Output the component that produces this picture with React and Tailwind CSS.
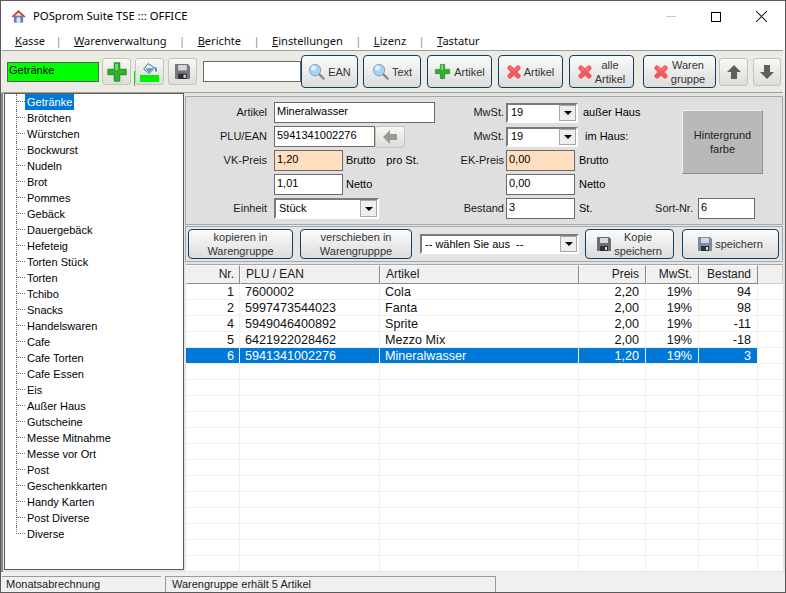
import React from 'react';

const groups = ['Getränke','Brötchen','Würstchen','Bockwurst','Nudeln','Brot','Pommes','Gebäck','Dauergebäck','Hefeteig','Torten Stück','Torten','Tchibo','Snacks','Handelswaren','Cafe','Cafe Torten','Cafe Essen','Eis','Außer Haus','Gutscheine','Messe Mitnahme','Messe vor Ort','Post','Geschenkkarten','Handy Karten','Post Diverse','Diverse'];

const rows = [
  ['1','7600002','Cola','2,20','19%','94'],
  ['2','5997473544023','Fanta','2,00','19%','98'],
  ['4','5949046400892','Sprite','2,00','19%','-11'],
  ['5','6421922028462','Mezzo Mix','2,00','19%','-18'],
  ['6','5941341002276','Mineralwasser','1,20','19%','3'],
];

// Icons
function Plus({ size = 22 }) {
  return (
    <svg viewBox="0 0 24 24" width={size} height={size}>
      <path d="M9 2h6v7h7v6h-7v7H9v-7H2V9h7z" fill="#2fb02f" stroke="#1d8a1d" strokeWidth="1" />
      <path d="M10 3h3v7h-3z" fill="#6fe06f" />
    </svg>
  );
}

function Cross({ size = 14 }) {
  return (
    <svg viewBox="0 0 14 14" width={size} height={size}>
      <path d="M3 3 11 11M11 3 3 11" stroke="#f2585c" strokeWidth="5" strokeLinecap="round" />
      <path d="M3 2.500 6 5M11 2.500 8 5" stroke="#fb9a9c" strokeWidth="1" strokeLinecap="round" />
    </svg>
  );
}

function Lens() {
  return (
    <svg viewBox="0 0 18 18" width="17" height="17">
      <path d="m11.500 11.500 5 5" stroke="#8a8a80" strokeWidth="2.500" strokeLinecap="round" />
      <circle cx="7.500" cy="7.500" r="6" fill="#a9d4f5" stroke="#7d9db8" strokeWidth="1" />
      <circle cx="6" cy="5.500" r="2.500" fill="#e4f3fd" />
    </svg>
  );
}

function Floppy({ size = 14, color = '#6b6e76' }) {
  return (
    <svg viewBox="0 0 14 14" width={size} height={size}>
      <path d="M0 0h12l2 2v12H0z" fill={color} />
      <path d="M3 1h8v5H3z" fill="#d4d8de" />
      <path d="M3 9h8v5H3z" fill="#2e3036" />
      <path d="M8 10h2v3H8z" fill="#d4d8de" />
    </svg>
  );
}

function Arrow({ dir }) {
  const d = dir === 'up' ? 'M8 1 15 8h-4v7H5V8H1z' : dir === 'down' ? 'M5 1h6v7h4l-7 7-7-7h4z' : 'M1 8l7-7v4h7v6H8v4z';
  return (
    <svg viewBox="0 0 16 16" width="16" height="16">
      <path d={d} fill={dir === 'left' ? '#9a9a90' : '#5f5f58'} />
    </svg>
  );
}

function House() {
  return (
    <svg viewBox="0 0 16 16" width="15" height="15">
      <path d="M3 7h10v7.500H3z" fill="#5d86b8" />
      <path d="M6 9h4v5.500H6z" fill="#dfe8f2" />
      <path d="M.5 8 8 1l7.500 7-1.500 1L8 4 2 9z" fill="#c9452e" />
    </svg>
  );
}

// Pieces
function SmallBtn({ children, className = '' }) {
  return (
    <div className={`flex items-center justify-center rounded-[3px] border border-[#c4c4bb] bg-gradient-to-b from-[#f8f8f4] to-[#deded8] ${className}`}>
      {children}
    </div>
  );
}

function BlueBtn({ icon, children, className = '' }) {
  return (
    <div className={`flex items-center justify-center gap-[3px] rounded-[4px] border border-[#123f66] bg-gradient-to-b from-[#fbfbfb] to-[#dcdcdc] leading-[14px] text-[#333] ${className}`}>
      {icon}
      {children && <div className="text-center">{children}</div>}
    </div>
  );
}

function Input({ value, className = '', bg = 'bg-white' }) {
  return (
    <div className={`h-[21px] shrink-0 border border-[#6a6a6a] pl-[2px] leading-[16px] text-black ${bg} ${className}`}>{value}</div>
  );
}

function Select({ value, className = '', h = 'h-[20px]' }) {
  return (
    <div className={`flex shrink-0 items-center border-2 border-t-[#7b7b7b] border-l-[#7b7b7b] border-r-white border-b-white bg-white pl-[3px] text-black ${h} ${className}`}>
      <span className="flex-1 whitespace-pre">{value}</span>
      <div className="flex h-full w-[17px] items-center justify-center border border-[#a8a8a8] bg-[#eeeeee]">
        <div className="h-0 w-0 border-x-[4px] border-t-[4px] border-x-transparent border-t-black" />
      </div>
    </div>
  );
}

function Label({ children, className = '' }) {
  return <div className={`shrink-0 text-right text-[#1a1a1a] ${className}`}>{children}</div>;
}

function Row({ children }) {
  return <div className="flex h-[21px] items-center whitespace-nowrap">{children}</div>;
}

function MenuSep() {
  return <span className="w-[31px] text-center text-[#9b7fa0]">|</span>;
}

function TreeItem({ name, index }) {
  const last = index === groups.length - 1;
  return (
    <div className="flex h-[16px] items-stretch">
      <div className={`ml-[11px] w-[9px] shrink-0 border-l border-dotted border-[#777] ${last ? 'h-[8px] border-b' : ''}`}>
        {!last && <div className="mt-[7px] border-t border-dotted border-[#777]" />}
      </div>
      <span className={`px-[2px] leading-[16px] ${index === 0 ? 'bg-[#0078d7] text-white' : 'text-black'}`}>{name}</span>
    </div>
  );
}

const cols = [
  ['w-[54px]', 'text-right pr-[5px]'],
  ['w-[140px]', 'pl-[5px]'],
  ['w-[199px]', 'pl-[5px]'],
  ['w-[67px]', 'text-right pr-[6px]'],
  ['w-[53px]', 'text-right pr-[6px]'],
  ['w-[59px]', 'text-right pr-[6px]'],
];
const heads = ['Nr.', 'PLU / EAN', 'Artikel', 'Preis', 'MwSt.', 'Bestand'];

export default function App() {
  return (
    <div className="flex h-[593px] w-[786px] flex-col overflow-hidden border border-[#5a5a5a] bg-[#f0f0f0] text-[11px] font-['Liberation_Sans',sans-serif]">
      {/* Title bar */}
      <div className="flex h-[31px] shrink-0 items-center bg-white pl-[10px] font-['Noto_Sans',sans-serif] text-[11.3px] text-black">
        <House />
        <span className="ml-[7px] flex-1">POSprom Suite TSE ::: OFFICE</span>
        <div className="h-px w-[10px] bg-[#c8c8c8]" />
        <div className="ml-[35px] h-[10px] w-[10px] border border-black" />
        <svg viewBox="0 0 10 10" width="11" height="11" className="ml-[35px] mr-[18px]">
          <path d="M0 0 10 10M10 0 0 10" stroke="#222" strokeWidth="1" />
        </svg>
      </div>

      {/* Menu */}
      <div className="flex h-[18px] shrink-0 items-center bg-white pl-[14px] font-['Noto_Sans',sans-serif] text-[11.1px] text-[#111]">
        <span className="w-[28px]"><u>K</u>asse</span>
        <MenuSep />
        <span><u>W</u>arenverwaltung</span>
        <MenuSep />
        <span><u>B</u>erichte</span>
        <MenuSep />
        <span><u>E</u>instellungen</span>
        <MenuSep />
        <span><u>L</u>izenz</span>
        <MenuSep />
        <span><u>T</u>astatur</span>
      </div>

      {/* Toolbar */}
      <div className="ml-[1px] mr-[2px] flex h-[43px] shrink-0 items-center border-y border-[#a0a09a] bg-[#ebebe3] pl-[1px]">
        <div className="ml-[4px] h-[20px] w-[92px] border border-[#4e6b4e] bg-[#00ff00] pl-[1px] leading-[15px] text-black">Getränke</div>
        <SmallBtn className="ml-[3px] h-[27px] w-[29px]"><Plus /></SmallBtn>
        <div className="mb-[6px] ml-[3px] h-[15px] w-px self-end bg-[#00e000]" />
        <SmallBtn className="h-[27px] w-[29px] flex-col">
          <svg viewBox="0 0 20 13" width="18" height="13">
            <path d="M8 1 15 6 9 12 3 7z" fill="#e6eef5" stroke="#3d5f80" strokeWidth="1" />
            <path d="M5 6.500 14 6 9 11z" fill="#5a96cc" />
            <path d="M15 5h2l1 4c0 1.500-2 1.500-2 0z" fill="#3a86c8" />
          </svg>
          <div className="h-[7px] w-[19px] bg-[#00f000]" />
        </SmallBtn>
        <SmallBtn className="ml-[4px] h-[27px] w-[29px]"><Floppy size={15} color="#77787c" /></SmallBtn>
        <div className="ml-[6px] h-[21px] w-[98px] border border-[#6a6a6a] bg-white" />
        <BlueBtn className="h-[33px] w-[57px]" icon={<Lens />}>EAN</BlueBtn>
        <BlueBtn className="ml-[5px] h-[33px] w-[58px]" icon={<Lens />}>Text</BlueBtn>
        <BlueBtn className="ml-[6px] h-[33px] w-[65px]" icon={<Plus size={17} />}>Artikel</BlueBtn>
        <BlueBtn className="ml-[6px] h-[33px] w-[65px]" icon={<Cross />}>Artikel</BlueBtn>
        <BlueBtn className="ml-[6px] h-[33px] w-[65px]" icon={<Cross />}>alle<br />Artikel</BlueBtn>
        <BlueBtn className="ml-[9px] h-[33px] w-[73px]" icon={<Cross />}>Waren<br />gruppe</BlueBtn>
        <SmallBtn className="ml-[3px] h-[28px] w-[29px]"><Arrow dir="up" /></SmallBtn>
        <SmallBtn className="ml-[5px] h-[28px] w-[28px]"><Arrow dir="down" /></SmallBtn>
      </div>

      {/* Main area */}
      <div className="flex min-h-0 flex-1 border-l-2 border-[#8a8a8a] bg-[#e4e4e4]">
        {/* Tree */}
        <div className="ml-[1px] h-[477px] w-[180px] shrink-0 border border-[#5e5e5e] bg-white">
          {groups.map((g, i) => <TreeItem key={g} name={g} index={i} />)}
        </div>

        {/* Right side */}
        <div className="flex min-w-0 flex-1 flex-col">
          {/* Form */}
          <div className="ml-px mr-[2px] mt-[3px] flex h-[129px] shrink-0 gap-0 border border-[#a8a8a8] bg-[#dfdfdf] pt-[5px]">
            <div className="flex w-[254px] shrink-0 flex-col gap-[3px]">
              <Row><Label className="w-[81px]">Artikel</Label><Input className="ml-[7px] w-[161px]" value="Mineralwasser" /></Row>
              <Row>
                <Label className="w-[81px]">PLU/EAN</Label>
                <Input className="ml-[7px] w-[101px]" value="5941341002276" />
                <SmallBtn className="h-[22px] w-[30px]"><Arrow dir="left" /></SmallBtn>
              </Row>
              <Row>
                <Label className="w-[81px]">VK-Preis</Label>
                <Input className="ml-[7px] w-[69px]" bg="bg-[#ffdfc0]" value="1,20" />
                <span className="ml-[3px]">Brutto</span>
                <span className="ml-[11px]">pro St.</span>
              </Row>
              <Row><div className="w-[81px]" /><Input className="ml-[7px] w-[69px]" value="1,01" /><span className="ml-[3px]">Netto</span></Row>
              <Row><Label className="w-[81px]">Einheit</Label><Select className="ml-[7px] w-[105px]" value="Stück" h="h-[21px]" /></Row>
            </div>

            <div className="flex w-[200px] shrink-0 flex-col gap-[3px]">
              <Row><Label className="w-[64px]">MwSt.</Label><Select className="ml-[2px] w-[72px]" value="19" /><span className="ml-[5px]">außer Haus</span></Row>
              <Row><Label className="w-[64px]">MwSt.</Label><Select className="ml-[2px] w-[72px]" value="19" /><span className="ml-[7px]">im Haus:</span></Row>
              <Row><Label className="w-[64px]">EK-Preis</Label><Input className="ml-[2px] w-[69px]" bg="bg-[#ffdfc0]" value="0,00" /><span className="ml-[4px]">Brutto</span></Row>
              <Row><div className="w-[64px]" /><Input className="ml-[2px] w-[69px]" value="0,00" /><span className="ml-[4px]">Netto</span></Row>
              <Row><Label className="w-[64px]">Bestand</Label><Input className="ml-[2px] w-[69px]" value="3" /><span className="ml-[4px]">St.</span></Row>
            </div>

            <div className="flex min-w-0 flex-1 flex-col">
              <div className="ml-[42px] mt-[8px] flex h-[64px] w-[81px] items-center justify-center border border-[#8e8e8e] border-t-[#efefef] border-l-[#efefef] bg-[#b9b9b9] text-center leading-[14px] text-[#222]">
                Hintergrund<br />farbe
              </div>
              <div className="mt-[24px] flex h-[21px] items-center">
                <Label className="w-[53px]">Sort-Nr.</Label>
                <Input className="ml-[5px] w-[57px]" value="6" />
              </div>
            </div>
          </div>

          {/* Actions */}
          <div className="ml-px mr-[2px] mt-[1px] flex h-[36px] shrink-0 items-center border border-[#a8a8a8] bg-[#e4e4e4] pl-[2px]">
            <BlueBtn className="h-[30px] w-[105px]">kopieren in<br />Warengruppe</BlueBtn>
            <BlueBtn className="ml-[7px] h-[30px] w-[112px]">verschieben in<br />Warengrupppe</BlueBtn>
            <Select className="ml-[8px] w-[159px]" value="-- wählen Sie aus  --" />
            <BlueBtn className="ml-[6px] h-[30px] w-[89px]" icon={<Floppy />}>Kopie<br />speichern</BlueBtn>
            <BlueBtn className="ml-[8px] h-[30px] w-[97px]" icon={<Floppy color="#7c8aa0" />}>speichern</BlueBtn>
          </div>

          {/* Grid */}
          <div className="mb-[1px] ml-[2px] mr-[2px] mt-[2px] flex min-h-0 flex-1 flex-col overflow-hidden border-t border-[#a8a8a8] bg-white">
            <div className="flex h-[19px] shrink-0 bg-[#f0f0f0] text-[12px]">
              {heads.map((h, i) => (
                <div key={h} className={`${cols[i][0]} ${cols[i][1]} shrink-0 border border-[#f8f8f8] border-r-[#8a8a8a] border-b-[#8a8a8a] leading-[17px] text-[#1a1a1a]`}>{h}</div>
              ))}
              <div className="flex-1 border-r border-b border-[#d0d0d0]" />
            </div>
            {Array.from({ length: 19 }).map((_, r) => {
              const row = rows[r];
              const sel = r === 4;
              return (
                <div key={r} className="flex h-[16px] shrink-0 text-[12.6px]">
                  {cols.map((c, i) => (
                    <div key={i} className={`${c[0]} ${c[1]} shrink-0 border-b border-r border-[#f0f0f0] leading-[16px] ${sel ? 'bg-[#0078d7] text-white' : 'text-[#111]'}`}>
                      {row ? row[i] : ''}
                    </div>
                  ))}
                  <div className="flex-1 border-b border-[#f0f0f0]" />
                </div>
              );
            })}
          </div>
        </div>
      </div>

      {/* Status bar */}
      <div className="flex h-[20px] shrink-0 items-end bg-[#f0f0f0] leading-[15px] text-[#222]">
        <div className="ml-[1px] h-[16px] w-[159px] border-t border-[#9a9a9a] pl-[4px]">Monatsabrechnung</div>
        <div className="ml-[4px] h-[16px] w-[331px] border-l border-t border-r border-[#9a9a9a] pl-[6px]">Warengruppe erhält 5 Artikel</div>
      </div>
    </div>
  );
}
